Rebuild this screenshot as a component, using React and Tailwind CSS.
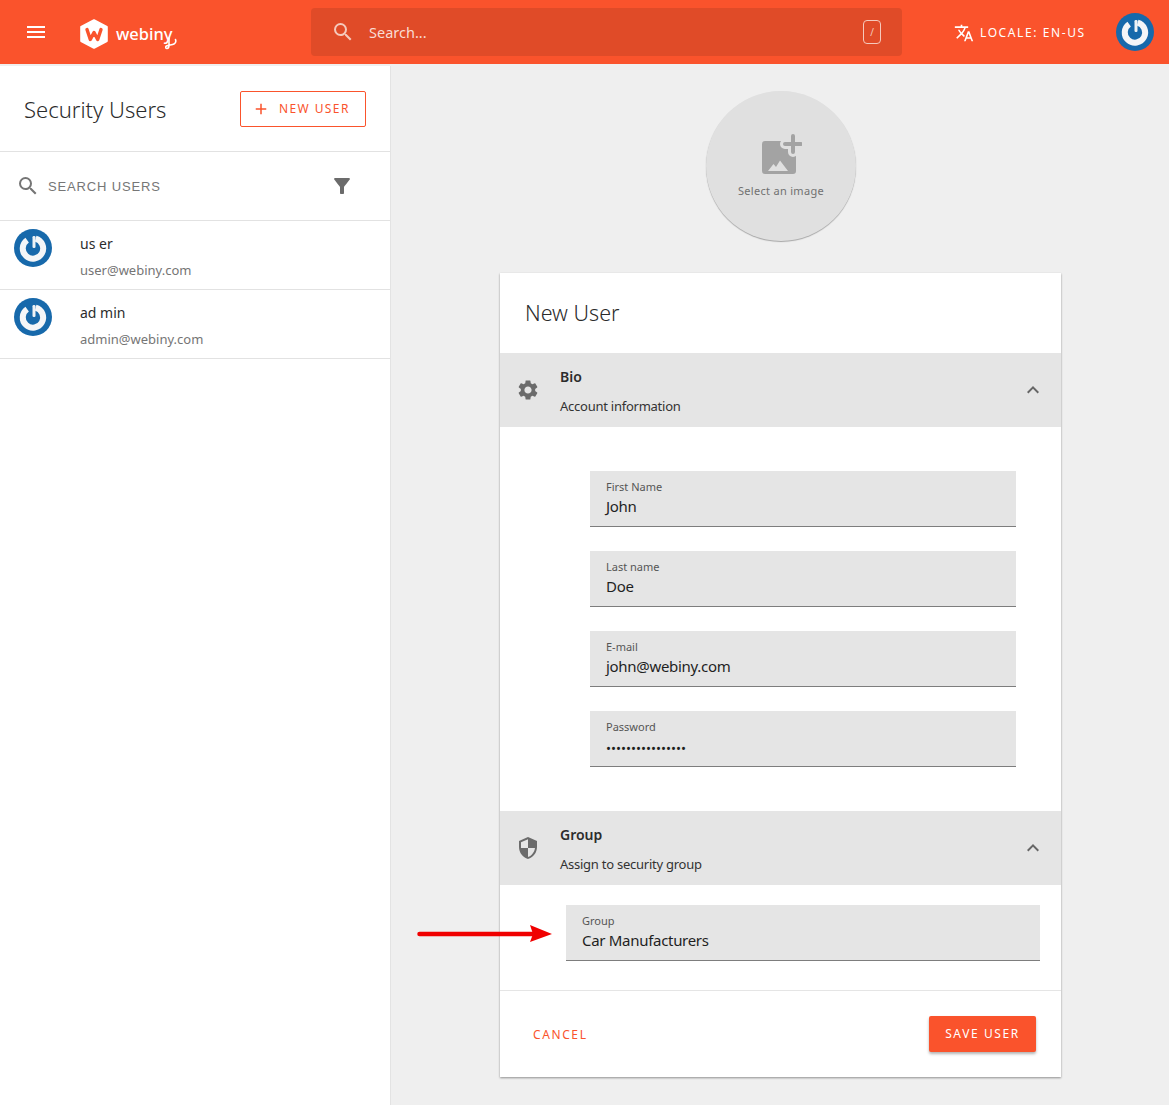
import React from "react";

const font = { fontFamily: '"Noto Sans", "Open Sans", sans-serif' };

const PowerAvatar = ({ size = 38 }) => (
  <svg width={size} height={size} viewBox="0 0 38 38" className="shrink-0">
    <circle cx="19" cy="19" r="19" fill="#1769ab" />
    <g className="blur-[0.7px]">
      <path
        d="M13.150 11.100 A10.200 10.200 0 1 0 21.640 9.650"
        fill="none"
        stroke="#f4f6f8"
        strokeWidth="6"
      />
      <rect x="18.500" y="7" width="3" height="12" rx="1.200" fill="#eef2f5" />
    </g>
  </svg>
);

const Field = ({ label, value, small }) => (
  <div className="h-14 bg-[#e5e5e5] border-b border-[#7d7d7d] pl-4 pt-[9px]">
    <div className="text-[11px] leading-[14px] text-[#555]">{label}</div>
    <div className={`${small ? "text-[13.300px] pt-0.5" : "text-[15px] tracking-[-0.3px]"} leading-[22px] mt-px text-[#1f1f1f]`}>{value}</div>
  </div>
);

const SectionHeader = ({ icon, title, sub }) => (
  <div className="h-[74px] bg-[#e5e5e5] flex items-center relative">
    <div className="w-[60px] flex justify-center">{icon}</div>
    <div className="flex-1 pt-px">
      <div className="text-[14px] leading-5 font-semibold text-[#2c2c2c] mt-px">{title}</div>
      <div className="text-[13px] leading-5 mt-[9px] text-[#333] tracking-[-0.25px]">{sub}</div>
    </div>
    <svg width="24" height="24" viewBox="0 0 24 24" className="mr-4" fill="#666">
      <path d="M7.41 15.41 12 10.83l4.59 4.58L18 14l-6-6-6 6z" />
    </svg>
  </div>
);

const GearIcon = () => (
  <svg width="24" height="24" viewBox="0 0 24 24" fill="#6b6b6b" className="-ml-1">
    <path d="M19.14 12.94c.04-.3.06-.61.06-.94 0-.32-.02-.64-.07-.94l2.03-1.58a.49.49 0 0 0 .12-.61l-1.92-3.32a.488.488 0 0 0-.59-.22l-2.39.96c-.5-.38-1.03-.7-1.62-.94l-.36-2.54a.484.484 0 0 0-.48-.41h-3.84c-.24 0-.43.17-.47.41l-.36 2.54c-.59.24-1.13.57-1.62.94l-2.39-.96c-.22-.08-.47 0-.59.22L2.74 8.87c-.12.21-.08.47.12.61l2.03 1.58c-.05.3-.09.63-.09.94s.02.64.07.94l-2.03 1.58a.49.49 0 0 0-.12.61l1.92 3.32c.12.22.37.29.59.22l2.39-.96c.5.38 1.03.7 1.62.94l.36 2.54c.05.24.24.41.48.41h3.84c.24 0 .44-.17.47-.41l.36-2.54c.59-.24 1.13-.56 1.62-.94l2.39.96c.22.08.47 0 .59-.22l1.92-3.32c.12-.22.07-.47-.12-.61l-2.01-1.58zM12 15.6c-1.98 0-3.6-1.62-3.6-3.6s1.62-3.6 3.6-3.6 3.6 1.62 3.6 3.6-1.62 3.6-3.6 3.6z" />
  </svg>
);

const ShieldIcon = () => (
  <svg width="24" height="24" viewBox="0 0 24 24" fill="#6b6b6b" className="-ml-1">
    <path d="M12 1 3 5v6c0 5.55 3.84 10.74 9 12 5.16-1.26 9-6.45 9-12V5l-9-4zm0 10.99h7c-.53 4.12-3.28 7.79-7 8.94V12H5V6.3l7-3.11v8.8z" />
  </svg>
);

export default function App() {
  return (
    <div className="min-h-[1105px] bg-[#efefef] relative overflow-hidden" style={font}>
      {/* top bar */}
      <header className="h-16 bg-[#fa532c] flex items-center text-white">
        <div className="w-[72px] pl-6">
          <svg width="24" height="24" viewBox="0 0 24 24" fill="#fff">
            <path d="M3 18h18v-2H3v2zm0-5h18v-2H3v2zm0-7v2h18V6H3z" />
          </svg>
        </div>
        <div className="w-[239px] flex items-center">
          <svg width="28" height="30" viewBox="0 0 28 30" className="ml-[8px] mt-1">
            <path d="M14 1.200 26.800 8V22L14 28.800 1.200 22V8z" fill="#fff" stroke="#fff" strokeWidth="2" strokeLinejoin="round" />
            <path d="M7 10.500 10.300 20.500 14 13.500l3.700 7 3.300-10" fill="none" stroke="#fa532c" strokeWidth="3.400" strokeLinejoin="round" strokeLinecap="round" />
          </svg>
          <span className="relative ml-[8px] text-[16.500px] leading-none font-medium mt-1">
            webiny
            <svg width="16" height="16" viewBox="0 0 16 16" className="absolute right-[-8px] top-[10px]">
              <path d="M4 2v7c0 2-.8 3.500-2 3.500S0 11 1.500 10 7 9 9 8 11 5 10.500 3.500" fill="none" stroke="#fff" strokeWidth="1.600" strokeLinecap="round" />
            </svg>
          </span>
        </div>
        <div className="w-[591px] h-12 rounded bg-[#e04b28] flex items-center pl-5 pr-[21px]">
          <svg width="24" height="24" viewBox="0 0 24 24" fill="#f5c9bc">
            <path d="M15.5 14h-.79l-.28-.27A6.471 6.471 0 0 0 16 9.500 6.500 6.500 0 1 0 9.500 16c1.610 0 3.090-.59 4.230-1.570l.27.28v.79l5 4.990L20.490 19l-4.990-5zm-6 0C7.010 14 5 11.990 5 9.500S7.010 5 9.500 5 14 7.010 14 9.500 11.990 14 9.500 14z" />
          </svg>
          <span className="ml-[14px] flex-1 text-[14.500px] mt-px text-[#f9dcd3]">Search...</span>
          <span className="w-[18px] h-[24px] border border-[#f5c9bc] rounded text-[10px] leading-[22px] text-center text-[#f5c9bc]">/</span>
        </div>
        <div className="flex items-center ml-[52px] mt-px">
          <svg width="20" height="20" viewBox="0 0 24 24" fill="#fff">
            <path d="m12.870 15.070-2.540-2.510.03-.03A17.520 17.520 0 0 0 14.070 6H17V4h-7V2H8v2H1v1.990h11.170C11.500 7.920 10.440 9.750 9 11.350 8.070 10.320 7.300 9.190 6.690 8h-2c.73 1.630 1.730 3.170 2.980 4.560l-5.090 5.020L4 19l5-5 3.110 3.110.76-2.040zM18.500 10h-2L12 22h2l1.120-3h4.750L21 22h2l-4.500-12zm-2.620 7 1.620-4.330L19.120 17h-3.240z" />
          </svg>
          <span className="ml-[6px] text-[12px] tracking-[1.600px]">LOCALE: EN-US</span>
        </div>
        <div className="ml-auto mr-[15px]">
          <PowerAvatar />
        </div>
      </header>

      <div className="flex mt-0.5">
        {/* users list */}
        <aside className="w-[391px] min-h-[1039px] bg-white border-r border-[#e3e3e3]">
          <div className="h-[86px] flex items-center justify-between pl-6 pr-6 border-b border-[#e2e2e2]">
            <h1 className="text-[22px] text-[#2b2b2b] font-light mt-0.5">Security Users</h1>
            <button className="w-[126px] h-9 border border-[#fa532c] rounded-[2px] flex items-center pl-3 text-[#fa532c] text-[12px] tracking-[1.400px]">
              <svg width="18" height="18" viewBox="0 0 24 24" fill="#fa532c" className="mr-[9px] -ml-[1px]">
                <path d="M19 13h-6v6h-2v-6H5v-2h6V5h2v6h6v2z" />
              </svg>
              NEW USER
            </button>
          </div>
          <div className="h-[69px] flex items-center pl-4 pr-9 border-b border-[#e2e2e2]">
            <svg width="24" height="24" viewBox="0 0 24 24" fill="#757575">
              <path d="M15.5 14h-.79l-.28-.27A6.471 6.471 0 0 0 16 9.500 6.500 6.500 0 1 0 9.500 16c1.610 0 3.090-.59 4.230-1.570l.27.28v.79l5 4.990L20.490 19l-4.990-5zm-6 0C7.010 14 5 11.990 5 9.500S7.010 5 9.500 5 14 7.010 14 9.500 11.990 14 9.500 14z" />
            </svg>
            <span className="ml-2 flex-1 text-[13px] tracking-[0.85px] mt-0.5 text-[#767676]" style={{ fontFamily: '"Liberation Sans", sans-serif' }}>SEARCH USERS</span>
            <svg width="24" height="24" viewBox="0 0 24 24" fill="#6b6b6b">
              <path d="M4.250 5.610C6.270 8.200 10 13 10 13v6c0 .55.45 1 1 1h2c.55 0 1-.45 1-1v-6s3.720-4.800 5.740-7.390A.998.998 0 0 0 18.950 4H5.040c-.83 0-1.300.95-.79 1.610z" />
            </svg>
          </div>
          {[
            ["us er", "user@webiny.com"],
            ["ad min", "admin@webiny.com"],
          ].map(([name, email]) => (
            <div key={email} className="h-[69px] flex border-b border-[#e2e2e2] pl-[14px] pt-2">
              <PowerAvatar />
              <div className="ml-7">
                <div className="text-[14px] leading-5 mt-[5px] text-[#2c2c2c]">{name}</div>
                <div className="text-[13px] leading-4 mt-[8px] text-[#757575]">{email}</div>
              </div>
            </div>
          ))}
        </aside>

        {/* user form */}
        <main className="flex-1 pt-[25px]">
          <div className="w-[150px] h-[150px] ml-[315px] rounded-full bg-[#e0e0e0] shadow-[0_1px_1px_rgba(0,0,0,0.3)] flex flex-col items-center pt-[43px]">
            <svg width="42" height="42" viewBox="0 0 42 42">
              <rect x="2" y="7" width="34" height="33" rx="3" fill="#a3a3a3" />
              <path d="M33 2v16M25 10h16" stroke="#e0e0e0" strokeWidth="10" strokeLinecap="round" />
              <path d="M33 2v16M25 10h16" stroke="#a3a3a3" strokeWidth="4" strokeLinecap="round" />
              <path d="M8 37l5.500-7 2.500 3 4-6.500L28 37z" fill="#e0e0e0" />
            </svg>
            <span className="text-[11px] tracking-[0.3px] leading-4 mt-[7px] text-[#707070]">Select an image</span>
          </div>

          <div className="w-[561px] ml-[109px] mt-8 bg-white shadow-[0_1px_2px_rgba(0,0,0,0.4)]">
            <div className="h-20 flex items-center pl-[25px] text-[21.500px] font-light text-[#2b2b2b]">New User</div>

            <SectionHeader icon={<GearIcon />} title="Bio" sub="Account information" />
            <div className="px-[90px] pr-[45px] pt-11 pb-11 flex flex-col gap-6">
              <Field label="First Name" value="John" />
              <Field label="Last name" value="Doe" />
              <Field label="E-mail" value="john@webiny.com" />
              <Field label="Password" value="••••••••••••••••" small />
            </div>

            <SectionHeader icon={<ShieldIcon />} title="Group" sub="Assign to security group" />
            <div className="px-[66px] pr-[21px] pt-5 pb-[29px] border-b border-[#e5e5e5]">
              <Field label="Group" value="Car Manufacturers" />
            </div>

            <div className="h-[86px] flex items-center justify-between pl-[33px] pr-[25px]">
              <button className="text-[12px] tracking-[1.600px] text-[#fa532c] mt-0.5">CANCEL</button>
              <button className="w-[107px] h-9 rounded-[2px] bg-[#fa532c] text-white text-[12px] tracking-[1.600px] shadow-[0_2px_3px_rgba(0,0,0,0.3)]">SAVE USER</button>
            </div>
          </div>
        </main>
      </div>

      {/* annotation arrow over the form */}
      <svg width="140" height="24" viewBox="0 0 140 24" className="absolute left-[415px] top-[922px]">
        <path d="M4.500 12H118" stroke="#f00000" strokeWidth="4.500" strokeLinecap="round" />
        <path d="M115 3 137 12 115 20 118 12z" fill="#f00000" />
      </svg>
    </div>
  );
}
